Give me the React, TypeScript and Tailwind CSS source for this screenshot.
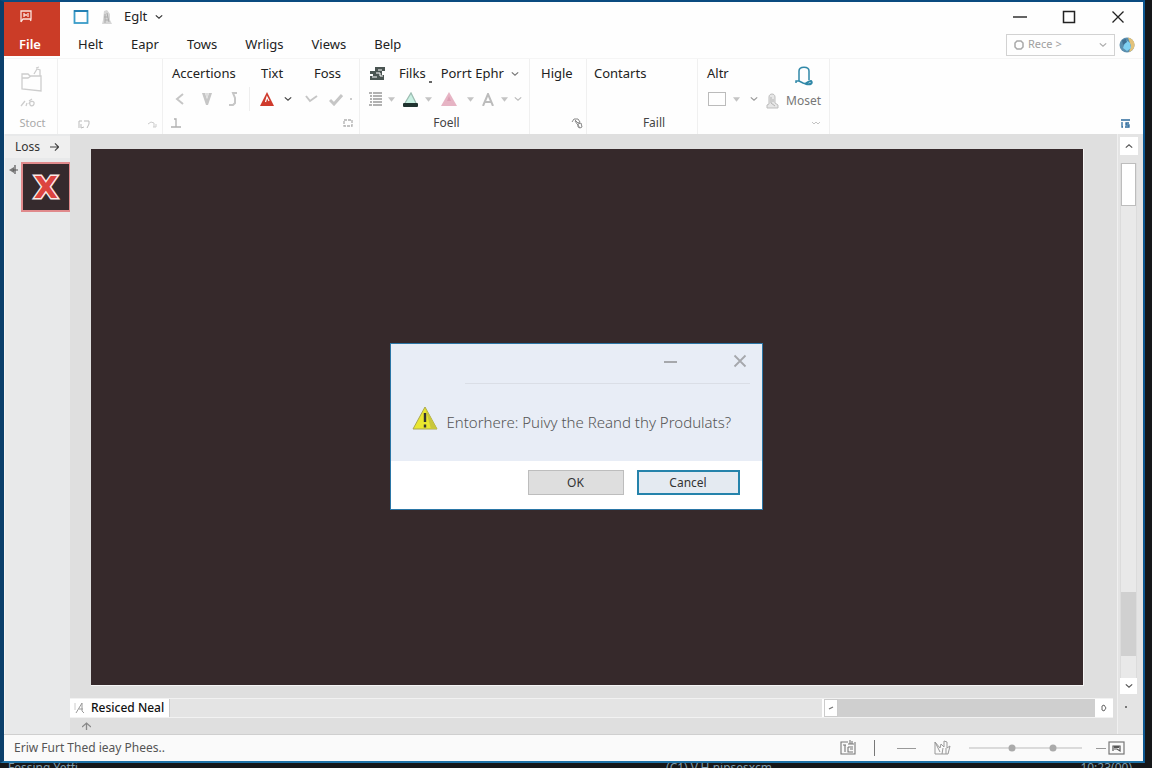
import type { ReactNode } from "react";

const menus = ["Helt", "Eapr", "Tows", "Wrligs", "Views", "Belp"];

function Chevron({ className = "text-[#555]" }: { className?: string }) {
  return (
    <svg viewBox="0 0 10 6" className={`w-2 h-[6px] shrink-0 ${className}`} fill="none" stroke="currentColor" strokeWidth="1.5">
      <path d="M1 1l4 3.6L9 1" />
    </svg>
  );
}

function Caret() {
  return (
    <svg viewBox="0 0 8 5" className="w-[7px] h-[5px] shrink-0 text-[#c4c4c4]" fill="currentColor">
      <path d="M0 0h8L4 5z" />
    </svg>
  );
}

function Cell({ label, className, children }: { label: string; className: string; children: ReactNode }) {
  return (
    <button type="button" aria-label={label} className={`h-6 shrink-0 flex items-center justify-center ${className}`}>
      {children}
    </button>
  );
}

function Group({ className, children }: { className: string; children: ReactNode }) {
  return <div className={`shrink-0 border-r border-[#f0f0f0] pt-[3px] ${className}`}>{children}</div>;
}

function TitleBar() {
  return (
    <div className="h-[29px] flex items-center pl-[13px] pr-[18px]">
      <svg viewBox="0 0 16 16" className="w-4 h-4" fill="none">
        <rect x="1.5" y="2" width="13" height="12" stroke="#3a9cc8" strokeWidth="1.8" />
        <path d="M1 2h14" stroke="#2380b4" strokeWidth="2" />
      </svg>
      <svg viewBox="0 0 12 16" className="w-3 h-4 ml-3">
        <path d="M3 2l3-1 3 4v6l2 4H1l1-4z" fill="#d6d6d6" />
        <path d="M4 5v9M6 4l2 9M3 8h4M4 11h4" stroke="#aaa" fill="none" />
      </svg>
      <button type="button" className="flex items-center gap-2 ml-[11px] text-[13px] text-[#222]">
        Eglt <Chevron className="text-[#333]" />
      </button>
      <div className="ml-auto flex items-center gap-[35px] text-[#222]">
        <button type="button" aria-label="Minimize">
          <svg viewBox="0 0 14 14" className="w-[14px] h-[14px]" stroke="currentColor" strokeWidth="1.4"><path d="M0 7h14" /></svg>
        </button>
        <button type="button" aria-label="Maximize">
          <svg viewBox="0 0 14 14" className="w-[14px] h-[14px]" fill="none" stroke="currentColor" strokeWidth="1.5"><rect x="1.5" y="1.5" width="11" height="11" /></svg>
        </button>
        <button type="button" aria-label="Close">
          <svg viewBox="0 0 14 14" className="w-[14px] h-[14px]" stroke="currentColor" strokeWidth="1.3"><path d="M1.5 1.5l11 11M12.5 1.5l-11 11" /></svg>
        </button>
      </div>
    </div>
  );
}

function MenuBar() {
  return (
    <div className="h-[27px] flex items-center pl-[18px] pr-2">
      <nav className="flex gap-7">
        {menus.map((m) => (
          <button key={m} type="button" className="text-[13px] text-[#222]">{m}</button>
        ))}
      </nav>
      <label className="ml-auto w-[109px] h-[22px] border border-[#d2d2d2] flex items-center gap-1 px-[7px]">
        <svg viewBox="0 0 10 10" className="w-[10px] h-[10px] shrink-0" fill="none" stroke="#a8a8a8" strokeWidth="1.5">
          <path d="M3 1h4l2 2v4L7 9H3L1 7V3z" />
        </svg>
        <input aria-label="Search" defaultValue="Rece >" className="w-full min-w-0 bg-transparent text-[11px] text-[#a0a0a0] outline-none" />
        <Chevron className="text-[#aaa]" />
      </label>
      <svg viewBox="0 0 16 16" className="w-4 h-4 ml-1">
        <circle cx="8" cy="8" r="7.5" fill="#5c8fae" />
        <path d="M9 .5a7.5 7.5 0 0 1 1 14.7L12 9z" fill="#e3c27a" />
        <path d="M7 3l4 3 1 5-4 3-4-3z" fill="#7fd0f2" />
        <path d="M3 3l4-1 1 3-4 3z" fill="#3f6f92" />
      </svg>
    </div>
  );
}

function Ribbon() {
  return (
    <div className="h-[76px] flex bg-[#fefefe] border-t border-[#f5f5f5] text-[13px] text-[#222]">
      <Group className="w-[54px] text-center">
        <button type="button" className="w-full flex flex-col items-center">
          <svg viewBox="0 0 24 44" className="w-6 h-11 mt-[3px]" fill="none" stroke="#cdcdcd" strokeWidth="1.3">
            <path d="M3 9h6l2 2h11v15l-19-2zM3 13h6l3-2M15 9l3-5 3 1v6M17 3l3-1" />
            <path d="M2 41l4-5M7 41l1-3M10 39c1-4 6-3 5 0s-5 2-4-1M10 36l3-2" />
          </svg>
          <span className="text-[11px] text-[#a9a9a9] leading-5 mt-1 ml-1">Stoct</span>
        </button>
      </Group>

      <Group className="w-[105px] flex items-end justify-between pl-5 pr-1 pb-[5px]">
        <svg viewBox="0 0 12 10" className="w-3 h-[10px]" fill="none" stroke="#bbb"><path d="M1 9V2h3M6 2h5v3l-2 4M3 5v4l3-1" /></svg>
        <svg viewBox="0 0 12 10" className="w-3 h-[10px]" fill="none" stroke="#ccc"><path d="M2 5l3-2 3 1v4M7 8h3V5" /></svg>
      </Group>

      <Group className="w-[197px]">
        <div className="h-6 flex items-center pl-[9px]">
          <button type="button" className="w-[89px] text-left">Accertions</button>
          <button type="button" className="w-[53px] text-left">Tixt</button>
          <button type="button">Foss</button>
        </div>
        <div className="h-[26px] flex items-center pl-1 text-[#c6c6c6]">
          <Cell label="Back" className="w-[26px]">
            <svg viewBox="0 0 10 12" className="w-[10px] h-3" fill="none" stroke="currentColor" strokeWidth="2"><path d="M8 1L2 6l6 5" /></svg>
          </Cell>
          <Cell label="Filter" className="w-7">
            <svg viewBox="0 0 12 12" className="w-3 h-3"><path d="M1 0h3l2 6 2-6h3L7 12H5z" fill="#c6c6c6" /><path d="M4 0h4L6 6z" fill="#dedede" /></svg>
          </Cell>
          <Cell label="Symbol" className="w-6">
            <svg viewBox="0 0 10 14" className="w-[10px] h-[14px]" fill="none" stroke="currentColor" strokeWidth="2"><path d="M9 1H5l2 5v5l-2 2H1" /></svg>
          </Cell>
          <div className="h-6 w-px bg-[#eee] mx-1" />
          <Cell label="Font colour" className="w-[26px]">
            <svg viewBox="0 0 14 14" className="w-[14px] h-[14px]"><path d="M7 0l7 14H0z" fill="#cf3a2c" /><path d="M5.5 10L7 5l2 4" stroke="#fff" fill="none" strokeWidth="1.2" /></svg>
          </Cell>
          <Cell label="Font colour options" className="w-4"><Chevron className="text-[#444]" /></Cell>
          <Cell label="Accept" className="w-[30px]">
            <svg viewBox="0 0 13 10" className="w-[13px] h-[10px]" fill="none" stroke="currentColor" strokeWidth="2"><path d="M1 2l4 5 7-5" /></svg>
          </Cell>
          <Cell label="Apply" className="w-5">
            <svg viewBox="0 0 14 13" className="w-[14px] h-[13px]" fill="none" stroke="currentColor" strokeWidth="3"><path d="M1 7l4 4 8-9" /></svg>
          </Cell>
          <div className="w-[2px] h-[2px] bg-[#ccc] ml-1" />
        </div>
        <div className="h-[22px] flex items-center justify-between pl-2 pr-[6px]">
          <svg viewBox="0 0 10 10" className="w-[10px] h-[10px]" fill="none" stroke="#b0b0b0" strokeWidth="1.3"><path d="M3 1h2v8M0 9h10" /></svg>
          <svg viewBox="0 0 10 8" className="w-[10px] h-2" fill="none" stroke="#b0b0b0" strokeWidth="1.3"><rect x="1" y="1" width="8" height="6" strokeDasharray="3 1" /></svg>
        </div>
      </Group>

      <Group className="w-[170px]">
        <div className="h-6 flex items-center pl-[10px]">
          <svg viewBox="0 0 15 14" className="w-[15px] h-[14px]">
            <path d="M5 0h10v4h-3v4h2v5H0V9h3V7H0V4h5z" fill="#4a5552" />
            <path d="M8 3h4M6 6h4v3h3M2 10h5" stroke="#fff" fill="none" />
          </svg>
          <button type="button" className="ml-[14px]">Filks</button>
          <span className="w-[3px] h-[2px] bg-[#666] ml-[3px] mt-4" />
          <button type="button" className="ml-[9px] flex items-center gap-[7px]">Porrt Ephr <Chevron className="text-[#777]" /></button>
        </div>
        <div className="h-[26px] flex items-center pl-1">
          <Cell label="List" className="w-[22px]">
            <svg viewBox="0 0 13 14" className="w-[13px] h-[14px]" stroke="#666" strokeWidth="1.2"><path d="M0 1h3M4 1h9M1 4h2M4 4h9M1 7h2M4 7h9M1 10h2M4 10h9M0 13h3M4 13h9" /></svg>
          </Cell>
          <Cell label="List options" className="w-[10px]"><Caret /></Cell>
          <Cell label="Highlight" className="w-7">
            <svg viewBox="0 0 15 15" className="w-[15px] h-[15px]"><path d="M8 1l5 10H2z" fill="#c8f0e2" /><path d="M2 11L8 1l5 10" fill="none" stroke="#9dbdb2" strokeWidth="1.3" /><rect x="0" y="11" width="15" height="4" rx="1" fill="#20332f" /></svg>
          </Cell>
          <Cell label="Highlight options" className="w-2"><Caret /></Cell>
          <Cell label="Shade" className="w-[34px]">
            <svg viewBox="0 0 16 14" className="w-4 h-[14px]"><path d="M8 0l8 14H0z" fill="#e6b4c4" /><path d="M6 9l2-5 2 5z" fill="#dc9db2" /></svg>
          </Cell>
          <Cell label="Shade options" className="w-2"><Caret /></Cell>
          <Cell label="Text style" className="w-7">
            <svg viewBox="0 0 12 13" className="w-3 h-[13px]" fill="none" stroke="#bcbcbc" strokeWidth="2"><path d="M1 13L6 1l5 12M3 9h6" /></svg>
          </Cell>
          <Cell label="Text style options" className="w-1"><Caret /></Cell>
          <Cell label="More" className="w-6"><Chevron className="text-[#bbb]" /></Cell>
        </div>
        <div className="h-[22px] leading-[22px] text-[12px] text-[#444] text-center pl-1">Foell</div>
      </Group>

      <Group className="w-[57px]">
        <div className="h-6 flex items-center pl-[11px]"><button type="button">Higle</button></div>
        <div className="h-[26px]" />
        <div className="h-[22px] flex items-center justify-end pr-[3px]">
          <svg viewBox="0 0 12 12" className="w-3 h-3" fill="none" stroke="#888"><path d="M1 5l2-3h4l2 3-2 1-3-3M4 4l5 7M7 7l3-1 1 4-2 1-2-1z" /></svg>
        </div>
      </Group>

      <Group className="w-[111px]">
        <div className="h-6 flex items-center pl-[7px]"><button type="button">Contarts</button></div>
        <div className="h-[26px]" />
        <div className="h-[22px] leading-[22px] text-[12px] text-[#444] text-center pl-6">Faill</div>
      </Group>

      <Group className="w-[132px]">
        <div className="h-6 flex items-center justify-between pl-[9px] pr-4">
          <button type="button">Altr</button>
          <svg viewBox="0 0 18 20" className="w-[18px] h-5 mt-1" fill="none" stroke="#3088a8" strokeWidth="1.5">
            <path d="M4 15V5c0-5 10-5 10 0v9M4 15H1v2M4 15l4 2 3 1" />
            <path d="M10 18c3-2 4-3 6-3 2 2 0 4-5 3" strokeWidth="2" />
          </svg>
        </div>
        <div className="h-[26px] flex items-center pl-[10px]">
          <span className="w-[18px] h-[14px] border border-[#bbb]" />
          <span className="ml-[7px] flex"><Caret /></span>
          <span className="ml-[10px] flex"><Chevron className="text-[#999]" /></span>
          <button type="button" className="ml-2 mt-1 flex items-center gap-[7px] text-[12px] text-[#777]">
            <svg viewBox="0 0 13 16" className="w-[13px] h-4">
              <path d="M3 11V4c0-4 6-4 6 0v6l3 2v3H1v-3z" fill="#e6e6e6" stroke="#bdbdbd" />
              <path d="M5 4v6l4 3M7 6v3" fill="none" stroke="#b4b4b4" />
            </svg>
            Moset
          </button>
        </div>
        <div className="h-[22px] flex items-center justify-end pr-[9px]">
          <svg viewBox="0 0 8 5" className="w-2 h-[5px]" fill="none" stroke="#c4c4c4"><path d="M0 1l2 2 2-2M4 1l2 2 2-2" /></svg>
        </div>
      </Group>

      <div className="flex-1 flex items-end justify-end pr-[13px] pb-[6px]">
        <svg viewBox="0 0 9 9" className="w-[9px] h-[9px]" fill="none" stroke="#2b6a9c" strokeWidth="1.3"><path d="M0 1h9M1 3v5h1M8 4H5v2h3v2H4" /></svg>
      </div>
    </div>
  );
}

function SlidePanel() {
  return (
    <aside className="w-[66px] shrink-0 bg-[#e8e9ea] border-l border-[#f4f4f4]">
      <div className="h-[22px] mt-[2px] flex items-center gap-[10px] pl-[10px] bg-[#efefef] text-[12px] text-[#333]">
        Loss
        <svg viewBox="0 0 10 10" className="w-[9px] h-[10px]" fill="none" stroke="#444" strokeWidth="1.3"><path d="M0 5h9M5.5 1l4 4-4 4" /></svg>
      </div>
      <div className="flex items-start pt-1 pl-1">
        <svg viewBox="0 0 10 10" className="w-[10px] h-[10px] mt-[3px] shrink-0"><path d="M0 5l5-3v6z" fill="#777" /><path d="M6 0v9M4 5h5" stroke="#555" strokeWidth="1.2" /></svg>
        <button type="button" className="w-[50px] h-[50px] ml-[2px] shrink-0 flex items-center justify-center bg-[#352a2d] border-2 border-[#e08a8c] font-['DejaVu_Sans'] font-bold text-[31px] leading-none text-[#dc443f] [-webkit-text-stroke:3px_#fbe9e6] [paint-order:stroke_fill]">
          X
        </button>
      </div>
    </aside>
  );
}

function VerticalScroll() {
  return (
    <div className="w-[26px] shrink-0 bg-[#e4e4e4] border-l border-[#f0f0f0] flex flex-col items-center pr-1 pt-[3px]">
      <button type="button" aria-label="Scroll up" className="w-[18px] h-[18px] bg-white flex items-center justify-center">
        <Chevron className="text-[#555] rotate-180" />
      </button>
      <div className="w-[17px] flex-1 mt-2 flex flex-col bg-[#e9e9e9] border-x border-[#dcdcdc]">
        <div className="h-[43px] bg-white border border-[#bdbdbd]" />
        <div className="flex-1" />
        <div className="h-16 bg-[#d0d0d0]" />
        <div className="h-[22px]" />
      </div>
      <button type="button" aria-label="Scroll down" className="w-[17px] h-4 bg-white flex items-center justify-center">
        <Chevron />
      </button>
      <div className="h-10 pt-3 pr-[5px]"><div className="w-[2px] h-[2px] bg-[#777]" /></div>
    </div>
  );
}

function Editor() {
  return (
    <div className="flex-1 min-w-0 flex flex-col bg-[#dfdfdf]">
      <div className="flex-1 flex pt-[15px] pl-[21px] pr-[33px]">
        <div className="flex-1 bg-[#36292b] border-r border-b border-[#f5f5f5]" />
      </div>
      <div className="h-5 mt-3 mr-1 flex bg-[#e4e4e4] border-y border-[#f2f2f2]">
        <button type="button" className="w-[100px] h-full bg-white border-r border-[#ccc] flex items-center gap-[6px] pl-1 text-[12px] font-medium text-[#111] whitespace-nowrap">
          <svg viewBox="0 0 11 12" className="w-[11px] h-3 shrink-0" fill="none" stroke="#999"><path d="M1 1v7" stroke="#ccc" /><path d="M2 11l6-10v8l2 2M5 7h4" /></svg>
          Resiced Neal
        </button>
        <div className="ml-auto w-[291px] bg-white flex pl-[2px]">
          <button type="button" aria-label="Scroll left" className="w-[14px] border border-[#ccc] flex items-center justify-center">
            <svg viewBox="0 0 6 4" className="w-[6px] h-1" stroke="#777" strokeWidth="1.3"><path d="M1 3l4-2" /></svg>
          </button>
          <div className="flex-1 bg-[#cfcfcf]" />
          <button type="button" aria-label="Scroll right" className="w-[18px] flex items-center justify-center">
            <svg viewBox="0 0 6 8" className="w-[6px] h-2" fill="none" stroke="#666"><path d="M1 2l2-1 2 3-2 3-2-1z" /></svg>
          </button>
        </div>
      </div>
      <div className="h-4 pl-3 pt-1">
        <svg viewBox="0 0 9 8" className="w-[9px] h-2" fill="none" stroke="#888" strokeWidth="1.3"><path d="M0 5l4.5-4L9 5M4.5 1v7" /></svg>
      </div>
    </div>
  );
}

function StatusBar() {
  return (
    <footer className="h-[27px] flex items-center pl-[10px] pr-[18px] bg-[#fafafa] border-t border-[#cfcfcf] text-[12px] text-[#555]">
      <span>Eriw Furt Thed ieay Phees..</span>
      <div className="ml-auto flex items-center">
        <svg viewBox="0 0 16 16" className="w-4 h-4" fill="none" stroke="#777" strokeWidth="1.1"><path d="M8 2H1v12h14V2M3 5h3M5 5v7M8 7h5M8 7v5h5M10 9h3M8 4h6M10 0v4M12 1v3" /></svg>
        <div className="w-px h-4 bg-[#777] ml-[18px]" />
        <div className="w-[19px] h-px bg-[#999] ml-[22px]" />
        <svg viewBox="0 0 17 16" className="w-[17px] h-4 ml-[18px]" fill="none" stroke="#999"><path d="M1 2v12h13l2-8-3 2V2l-3-1v6L7 4 6 8 1 2l5 10M8 14l1-6M12 14V8" /></svg>
        <svg viewBox="0 0 113 8" className="w-[113px] h-2 ml-[18px]">
          <path d="M0 4h113" stroke="#bbb" />
          <circle cx="43" cy="4" r="3.5" fill="#aaa" />
          <circle cx="84" cy="4" r="3.5" fill="#aaa" />
        </svg>
        <div className="w-[10px] h-px bg-[#999] ml-[14px]" />
        <svg viewBox="0 0 17 14" className="w-[17px] h-[14px] ml-[2px]" fill="none" stroke="#777" strokeWidth="1.2"><rect x="1" y="1" width="15" height="12" /><path d="M5 10V5h7v5L9 8H6" stroke="#555" /><path d="M6 6h5" strokeWidth="2" stroke="#555" /></svg>
      </div>
    </footer>
  );
}

function ConfirmDialog() {
  return (
    <div className="absolute inset-0 flex items-center justify-center pt-[84px]">
      <div role="dialog" aria-labelledby="dialog-message" className="w-[373px] bg-white border border-[#2b76a6]">
        <div className="bg-[#e8edf6] h-[117px]">
          <div className="h-[39px] flex items-start justify-end gap-[56px] pt-[10px] pr-[15px] text-[#a6a8ac]">
            <button type="button" aria-label="Minimize dialog">
              <svg viewBox="0 0 13 14" className="w-[13px] h-[14px]" stroke="currentColor" strokeWidth="2"><path d="M0 8h13" /></svg>
            </button>
            <button type="button" aria-label="Close dialog">
              <svg viewBox="0 0 14 14" className="w-[14px] h-[14px]" stroke="currentColor" strokeWidth="1.8"><path d="M1.5 1.5l11 11M12.5 1.5l-11 11" /></svg>
            </button>
          </div>
          <div className="ml-[74px] mr-3 h-px bg-[#dadee6]" />
          <div className="flex items-start gap-[9px] pl-[21px] pt-[22px]">
            <svg viewBox="0 0 26 24" className="w-[26px] h-6 shrink-0">
              <path d="M13 1l12 22H1z" fill="#e9e62f" stroke="#a9a650" strokeLinejoin="round" />
              <path d="M13 1l12 22h-6z" fill="#c9c73c" />
              <path d="M13 7v9M13 18.5v3" stroke="#333" strokeWidth="2.4" />
            </svg>
            <p id="dialog-message" className="pt-1 text-[15px] leading-6 font-light text-[#555] whitespace-nowrap">
              Entorhere: Puivy the Reand thy Produlats?
            </p>
          </div>
        </div>
        <div className="h-12 flex items-center justify-end gap-[13px] pr-[22px] pb-1 text-[12px] text-[#333]">
          <button type="button" className="w-24 h-[25px] bg-[#dedede] border border-[#bdbdbd]">OK</button>
          <button type="button" className="w-[103px] h-[25px] bg-[#e4eaf1] border-2 border-[#2583ab]">Cancel</button>
        </div>
      </div>
    </div>
  );
}

export default function App() {
  return (
    <div className="relative min-h-screen flex flex-col bg-[#151719] font-['Noto_Sans','Open_Sans',sans-serif]">
      <div className="flex-1 flex flex-col mr-[7px] border-t-2 border-b-2 border-l-4 border-r-2 border-t-[#0b4b80] border-b-[#1f73a8] border-l-[#0b3f6b] border-r-[#0d5790]">
        <div className="flex bg-[#fefefe]">
          <button type="button" className="w-14 h-[54px] shrink-0 bg-[#cb3c27] text-white flex flex-col items-center justify-between pt-[7px] pb-[2px]">
            <svg viewBox="0 0 14 14" className="w-[14px] h-[14px] mr-3" fill="none" stroke="#fbe3dd" strokeWidth="1.3"><path d="M2 13V2h10v8H4L2 13M5 4v4M5 6h3M9 4v4M11 10l1 2" /></svg>
            <span className="text-[13px] font-semibold leading-5 mr-1">File</span>
          </button>
          <div className="flex-1 min-w-0">
            <TitleBar />
            <MenuBar />
          </div>
        </div>
        <Ribbon />
        <div className="flex-1 flex">
          <SlidePanel />
          <Editor />
          <VerticalScroll />
        </div>
        <StatusBar />
      </div>
      <div className="h-[5px] overflow-hidden flex justify-between pl-2 pr-5 text-[12px] leading-[10px] text-[#7f9bab]">
        <span>Fessing Yetfi</span>
        <span className="ml-[588px] mr-auto">(C1) V.H nipsesxcm</span>
        <span>10:23(00)</span>
      </div>
      <ConfirmDialog />
    </div>
  );
}
